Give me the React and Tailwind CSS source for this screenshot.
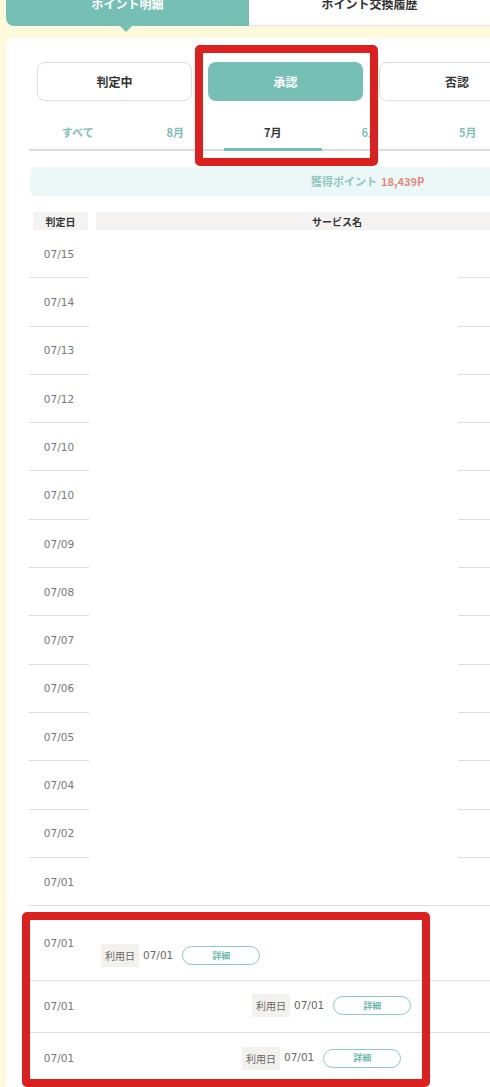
import React from "react";

const jp = { fontFamily: '"Noto Sans CJK JP", "Noto Sans", sans-serif' };
const num = { fontFamily: '"DejaVu Sans", Verdana, sans-serif' };

const dates = ["07/15","07/14","07/13","07/12","07/10","07/10","07/09","07/08","07/07","07/06","07/05","07/04","07/02","07/01"];

function UseBadge() {
  return (
    <div className="flex items-center">
      <span className="bg-[#f3f1ee] text-[#666] text-[10px] h-[23px] w-[38px] flex items-center justify-center" style={jp}>利用日</span>
      <span className="ml-[4px] text-[#666] text-[10.5px]" style={num}>07/01</span>
      <span className="ml-[9px] w-[78px] h-[19px] rounded-full border border-[#8ccbc1] flex items-center justify-center text-[9px] font-bold text-[#6fb9ae]" style={jp}>詳細</span>
    </div>
  );
}

export default function App() {
  return (
    <div className="relative w-[490px] h-[1087px] overflow-hidden bg-[#fdf9dc]" style={jp}>
      {/* top tabs */}
      <div className="flex ml-[6px] -mt-[16px] w-[700px]">
        <div className="relative w-[243px] h-[42px] bg-[#76bfb4] rounded-bl-[8px] flex items-center justify-center text-white text-[12px] font-bold pb-[2px]">
          ポイント明細
          <div className="absolute left-[114px] top-[42px] w-0 h-0 border-l-[6px] border-r-[6px] border-t-[6px] border-l-transparent border-r-transparent border-t-[#76bfb4]" />
        </div>
        <div className="w-[241px] h-[42px] bg-white border-b border-[#e4e4e4] flex items-center justify-center text-[#333] text-[12px] font-bold pb-[2px]">
          ポイント交換履歴
        </div>
      </div>

      {/* card */}
      <div className="ml-[6px] mt-[12px] w-[700px] bg-white rounded-tl-[8px] pl-[23px] pt-[24px] pb-10">
        {/* status buttons */}
        <div className="flex gap-[16px] ml-[8px]">
          <div className="w-[155px] h-[39px] rounded-[8px] border border-[#dddddd] flex items-center justify-center text-[12px] font-bold text-[#333]">判定中</div>
          <div className="w-[155px] h-[39px] rounded-[8px] bg-[#76bfb4] flex items-center justify-center text-[12px] font-bold text-white">承認</div>
          <div className="w-[156px] h-[39px] rounded-[8px] border border-[#dddddd] flex items-center justify-center text-[12px] font-bold text-[#333]">否認</div>
        </div>

        {/* month tabs */}
        <div className="mt-[14px] flex border-b-[2px] border-[#dddddd] w-[600px]">
          {["すべて","8月","7月","6月","5月","4月"].map((m, i) => (
            <div key={i} className={`relative w-[97.5px] h-[34px] flex items-center justify-center text-[11px] font-bold ${i === 2 ? "text-[#333]" : "text-[#7cc0b6]"}`}>
              {m}
              {i === 2 && <div className="absolute left-0 right-0 -bottom-[2px] h-[3px] bg-[#76bfb4]" />}
            </div>
          ))}
        </div>

        {/* points banner */}
        <div className="mt-[16px] ml-[1px] h-[29px] w-[650px] bg-[#ecf7f7] rounded-[6px] flex items-center pl-[281px] text-[11px] font-bold">
          <span className="text-[#8ec7c0]">獲得ポイント</span>
          <span className="ml-[4px] text-[#e08b78]">18,439P</span>
        </div>

        {/* header */}
        <div className="mt-[16px] flex h-[18px] ml-[4px]">
          <div className="w-[55px] bg-[#f5f3f1] flex items-center justify-center text-[10px] font-bold text-[#333]">判定日</div>
          <div className="ml-[8px] w-[482px] bg-[#f5f3f1] flex items-center justify-center text-[10px] font-bold text-[#333]">サービス名</div>
        </div>

        {/* rows */}
        <div className="w-[600px]">
          {dates.map((d, i) => (
            <div key={i} className={`flex h-[48.3px] ${i === dates.length - 1 ? "border-b border-[#dddddd]" : ""}`}>
              <div className={`w-[60px] flex items-center justify-center pt-[2px] text-[10.5px] text-[#777] ${i === dates.length - 1 ? "" : "border-b border-[#dddddd]"}`} style={num}>{d}</div>
              <div className="w-[369px]" />
              <div className={`flex-1 ${i === dates.length - 1 ? "" : "border-b border-[#dddddd]"}`} />
            </div>
          ))}

          <div className="flex h-[75px] border-b border-[#dddddd]">
            <div className="w-[60px] pt-[30px] text-center text-[10.5px] text-[#777]" style={num}>07/01</div>
            <div className="ml-[12px] mt-[38px]"><UseBadge /></div>
          </div>
          <div className="flex h-[52px] border-b border-[#dddddd] items-center">
            <div className="w-[60px] text-center text-[10.5px] text-[#777]" style={num}>07/01</div>
            <div className="ml-[163px] -mt-[2px]"><UseBadge /></div>
          </div>
          <div className="flex h-[52px] items-center">
            <div className="w-[60px] text-center text-[10.5px] text-[#777]" style={num}>07/01</div>
            <div className="ml-[153px] -mt-[2px]"><UseBadge /></div>
          </div>
        </div>
      </div>

      {/* annotation boxes */}
      <div className="absolute left-[195px] top-[45px] w-[183px] h-[121px] border-[8px] border-[#dc1f1f] rounded-[5px]" />
      <div className="absolute left-[22px] top-[912px] w-[408px] h-[175px] border-[8px] border-[#dc1f1f] rounded-[5px]" />
    </div>
  );
}
